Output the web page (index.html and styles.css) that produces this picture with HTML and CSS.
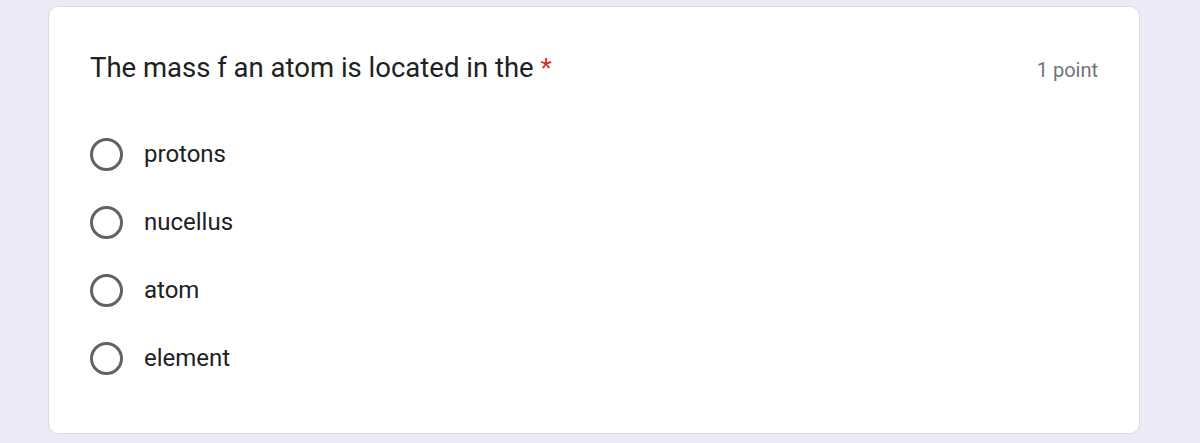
FILE: index.html
```html
<!DOCTYPE html>
<html>
<head>
<meta charset="utf-8">
<link rel="stylesheet" href="styles.css">
</head>
<body>
<div class="card">
  <div class="head">
    <div class="title">The mass f an atom is located in the <span class="req">*</span></div>
    <div class="points">1 point</div>
  </div>
  <div class="options">
    <div class="opt"><span class="radio"></span><span class="label">protons</span></div>
    <div class="opt"><span class="radio"></span><span class="label">nucellus</span></div>
    <div class="opt"><span class="radio"></span><span class="label">atom</span></div>
    <div class="opt"><span class="radio"></span><span class="label">element</span></div>
  </div>
</div>
</body>
</html>
```
FILE: styles.css
```css
html, body {
  margin: 0;
  padding: 0;
  background: #ede9f6;
  font-family: Roboto, "Liberation Sans", sans-serif;
}
body {
  padding: 6px 60px 0 48px;
  height: 443px;
  box-sizing: border-box;
}
.card {
  background: #fff;
  border: 1px solid #dadce0;
  border-radius: 10px;
  height: 428px;
  box-sizing: border-box;
  padding: 44px 41px 0 41px;
}
.head {
  display: flex;
  justify-content: space-between;
  align-items: baseline;
}
.title {
  font-size: 27.5px;
  color: #202124;
}
.req {
  color: #d93025;
  font-size: 26px;
  margin-left: 0;
}
.points {
  font-size: 20px;
  color: #70757a;
}
.options {
  margin-top: 53px;
  display: flex;
  flex-direction: column;
  gap: 34px;
}
.opt {
  display: flex;
  align-items: center;
  height: 34px;
}
.radio {
  width: 27px;
  height: 27px;
  border: 3.5px solid #5f6368;
  border-radius: 50%;
  flex: none;
}
.label {
  margin-left: 21px;
  font-size: 24px;
  color: #202124;
}
```
